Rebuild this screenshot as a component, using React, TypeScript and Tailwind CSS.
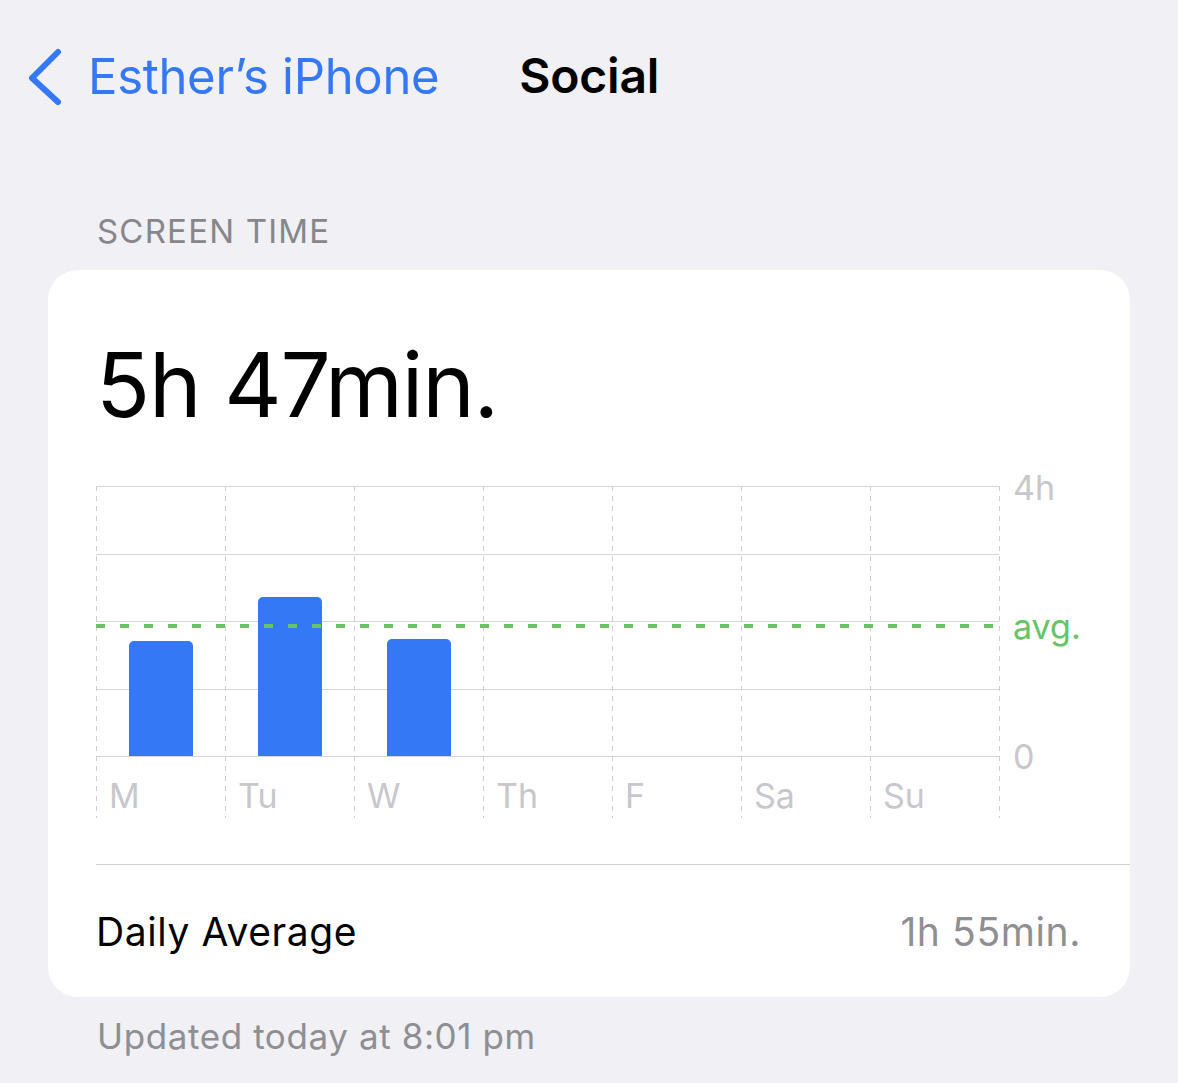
import React from 'react';

const DAYS = ['M', 'Tu', 'W', 'Th', 'F', 'Sa', 'Su'];
const BARS = [115, 159, 117, 0, 0, 0, 0];
const COL = 129;
const CHART_W = COL * 7;
const PLOT_H = 270;
const FULL_H = 332;

const font = { fontFamily: 'Inter, "Noto Sans", sans-serif' };

const ChartGrid = () => (
  <svg className="absolute left-0 top-0" width={CHART_W + 1} height={FULL_H} viewBox={`0 0 ${CHART_W + 1} ${FULL_H}`}>
    {[0, 67.5, 135, 202.5, 270].map(y => (
      <line key={y} x1={0} x2={CHART_W} y1={Math.round(y) + 0.5} y2={Math.round(y) + 0.5} stroke="#d6d6da" strokeWidth={1} />
    ))}
    {Array.from({ length: 8 }).map((_, i) => (
      <line key={i} x1={i * COL + 0.5} x2={i * COL + 0.5} y1={0} y2={FULL_H} stroke="#cfcfd3" strokeWidth={1} strokeDasharray="5 5" />
    ))}
  </svg>
);

export default function App() {
  return (
    <div className="min-h-[1083px] w-full bg-[#f0f0f5] text-black" style={font}>
      <header className="flex h-[152px] items-center">
        <div className="flex items-center pl-[26px]">
          <svg width="40" height="60" viewBox="0 0 40 60" className="mr-[22px]">
            <polyline points="32,6 6,32 32,56" fill="none" stroke="#3478f6" strokeWidth="6" strokeLinecap="round" strokeLinejoin="round" />
          </svg>
          <span className="text-[49px] leading-none tracking-[-0.3px] text-[#3478f6]">Esther’s iPhone</span>
        </div>
        <span className="ml-[80px] text-[48px] font-semibold leading-none tracking-[-0.2px]">Social</span>
      </header>

      <div className="pl-[97px] pt-[63px] pb-[22px] text-[33px] leading-none tracking-[1.2px] text-[#86868b]">SCREEN TIME</div>

      <div className="mx-[48px] overflow-hidden rounded-[30px] bg-white">
        <div className="pl-[48px] pt-[70px]">
          <div className="text-[89px] leading-none tracking-[-1.2px]">5h 47min.</div>

          <div className="relative mt-[57px]" style={{ height: FULL_H }}>
            <ChartGrid />
            <div className="relative flex items-end" style={{ height: PLOT_H, width: CHART_W }}>
              {BARS.map((h, i) => (
                <div key={DAYS[i]} className="flex w-[129px] justify-center">
                  {h > 0 && <div className="w-[64px] rounded-t-[5px] bg-[#3478f6]" style={{ height: h }} />}
                </div>
              ))}
            </div>
            <div className="relative flex h-[62px]">
              {DAYS.map(d => (
                <div key={d} className="w-[129px] pl-[13px] pt-[23px] text-[34px] leading-none text-[#c7c7cc]">{d}</div>
              ))}
            </div>
            <div className="absolute left-0 top-[138px] h-[4px] w-[903px] bg-[repeating-linear-gradient(90deg,#64c466_0px,#64c466_9px,transparent_9px,transparent_24px)]" />
            <div className="absolute left-[917px] top-[-15px] text-[34px] leading-none text-[#c7c7cc]">4h</div>
            <div className="absolute left-[917px] top-[124px] text-[34px] leading-none text-[#64c466]">avg.</div>
            <div className="absolute left-[917px] top-[254px] text-[34px] leading-none text-[#c7c7cc]">0</div>
          </div>

          <div className="mt-[46px] h-px bg-[#d1d1d6]" />
          <div className="flex h-[132px] items-center justify-between pr-[49px]">
            <span className="text-[39px] leading-none tracking-[0.6px]">Daily Average</span>
            <span className="text-[39px] leading-none tracking-[0.6px] text-[#8e8e93]">1h 55min.</span>
          </div>
        </div>
      </div>

      <div className="pl-[97px] pt-[22px] text-[35px] leading-none tracking-[0.6px] text-[#8e8e93]">Updated today at 8:01 pm</div>
    </div>
  );
}
